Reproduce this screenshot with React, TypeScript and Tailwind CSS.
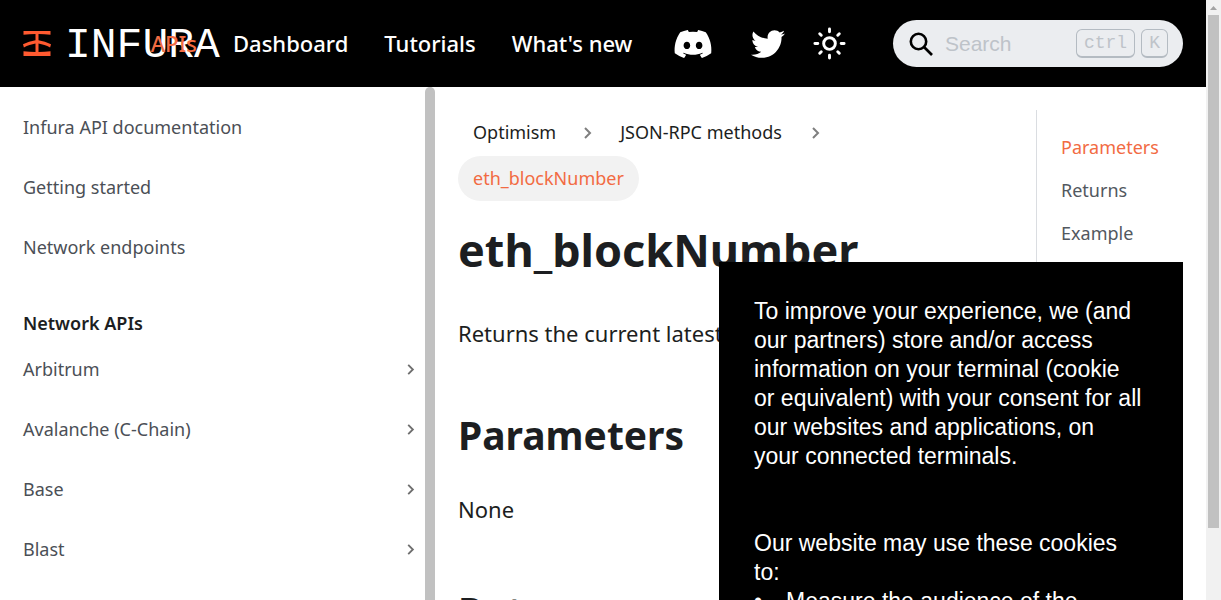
import React from "react";
import { FaDiscord, FaTwitter } from "react-icons/fa";

const docLinks = ["Infura API documentation", "Getting started", "Network endpoints"];
const networks = ["Arbitrum", "Avalanche (C-Chain)", "Base", "Blast"];
const sections = ["Parameters", "Returns", "Example"];

function Chevron({ className }: { className: string }) {
  return (
    <svg viewBox="0 0 10 14" fill="none" stroke="currentColor" strokeWidth="2" className={className} aria-hidden="true">
      <path d="M2 2l5 5-5 5" />
    </svg>
  );
}

function LogoMark() {
  return (
    <svg viewBox="0 0 28 25" className="h-[25px] w-7 shrink-0" fill="#ff5a30" aria-hidden="true">
      <path d="M.5 0h27v3.800c-4-.5-8-.8-12-.9v6.300c4.300.7 8.500 2.100 12.500 4.100l-.9 3.200c-3.700-1.900-7.600-3.200-11.600-3.900v8.500c4 0 8-.3 12-.8V25H.5v-4.700c4 .5 8 .8 12 .8v-8.500c-4 .7-7.900 2-11.600 3.900L0 13.300c4-2 8.200-3.400 12.500-4.100V2.900c-4 .1-8 .4-12 .9z" />
    </svg>
  );
}

function Sun() {
  return (
    <svg viewBox="0 0 24 24" fill="none" stroke="currentColor" strokeWidth="2" strokeLinecap="round" className="size-[35px]" aria-hidden="true">
      <circle cx="12" cy="12" r="4" />
      <path d="M12 2v2M12 20v2M2 12h2M20 12h2M5.290 5.290l1.060 1.060M17.650 17.650l1.060 1.060M18.710 5.290l-1.060 1.060M6.350 17.650l-1.060 1.060" />
    </svg>
  );
}

function Navbar() {
  return (
    <header className="flex h-[87px] shrink-0 items-center bg-black px-[23px] text-white">
      <a href="#home" aria-label="Infura" className="relative flex w-[210px] shrink-0 items-center gap-[14px]">
        <LogoMark />
        <span className="pt-1 font-['Liberation_Mono',monospace] text-[43px] leading-none">INFURA</span>
      </a>
      <nav className="relative flex items-center gap-9 text-[22px] font-medium whitespace-nowrap">
        <a href="#apis" className="absolute right-full mr-9 text-[#f26b43]">APIs</a>
        <a href="#dashboard">Dashboard</a>
        <a href="#tutorials">Tutorials</a>
        <a href="#new">What's new</a>
      </nav>
      <div className="ml-auto flex items-center">
        <a href="#discord" aria-label="Discord"><FaDiscord className="h-8 w-10" /></a>
        <a href="#twitter" aria-label="Twitter" className="ml-[38px]"><FaTwitter className="size-[34px]" /></a>
        <button type="button" aria-label="Switch theme" className="ml-[27px]"><Sun /></button>
        <label className="ml-[46px] flex h-[47px] w-[290px] items-center rounded-full bg-[#ebedf0] pr-[15px] pl-4 font-['Liberation_Sans',sans-serif]">
          <svg viewBox="0 0 24 24" fill="none" stroke="black" strokeWidth="2.600" className="size-6 shrink-0" aria-hidden="true">
            <circle cx="9.500" cy="9.500" r="7.700" />
            <path d="M15 15l8 8" />
          </svg>
          <input type="search" aria-label="Search" placeholder="Search" className="ml-3 min-w-0 flex-1 bg-transparent text-[21px] text-black outline-none placeholder:text-[#bec3c9]" />
          <span className="flex gap-[6px] font-['Liberation_Mono',monospace] text-lg text-[#bec3c9]">
            <kbd className="flex h-[29px] items-center rounded-md border border-b-2 border-[#b4bbc2] px-[7px] font-['Liberation_Mono',monospace]">ctrl</kbd>
            <kbd className="flex h-[29px] items-center rounded-md border border-b-2 border-[#b4bbc2] px-[7px] font-['Liberation_Mono',monospace]">K</kbd>
          </span>
        </label>
      </div>
    </header>
  );
}

function Sidebar() {
  return (
    <aside className="flex w-[435px] shrink-0 overflow-hidden">
      <nav className="flex-1 pt-[10px] pr-[9px] pl-[23px] text-lg text-[#4b4f56]">
        <ul>
          {docLinks.map((label) => (
            <li key={label} className="flex h-[60px] items-center"><a href="#doc">{label}</a></li>
          ))}
        </ul>
        <h2 className="mt-[30px] flex h-8 items-center font-semibold text-[#1c1e21]">Network APIs</h2>
        <ul>
          {networks.map((label) => (
            <li key={label} className="flex h-[60px] items-center">
              <a href="#network" className="flex flex-1 items-center justify-between">
                {label}
                <Chevron className="h-[13px] w-[10px] text-[#6f6f6f]" />
              </a>
            </li>
          ))}
        </ul>
      </nav>
      <div className="w-[10px] rounded-t-full bg-[#c1c1c1]" />
    </aside>
  );
}

function Article() {
  return (
    <article className="min-w-0 flex-1 text-[#1c1e21]">
      <nav aria-label="Breadcrumbs">
        <ol className="flex max-w-[400px] flex-wrap items-center gap-y-px text-lg leading-[45px]">
          <li className="flex items-center"><a href="#optimism" className="px-[15px]">Optimism</a><Chevron className="mx-3 h-[14px] w-[10px] text-[#7f7f7f]" /></li>
          <li className="flex items-center"><a href="#methods" className="px-[15px]">JSON-RPC methods</a><Chevron className="mx-[14px] h-[14px] w-[10px] text-[#7f7f7f]" /></li>
          <li className="rounded-full bg-[#f2f2f2] px-[15px] text-[#f26b43]">eth_blockNumber</li>
        </ol>
      </nav>
      <h1 className="mt-5 text-[45px] leading-[58px] font-bold">eth_blockNumber</h1>
      <p className="mt-[35px] text-[22px] leading-[38px]">Returns the current latest block number.</p>
      <h2 className="mt-[58px] text-[39px] leading-[50px] font-bold">Parameters</h2>
      <p className="mt-[30px] text-[22px] leading-[38px]">None</p>
      <h2 className="mt-[58px] text-[39px] leading-[50px] font-bold">Returns</h2>
    </article>
  );
}

function CookieNotice() {
  return (
    <section role="dialog" aria-label="Cookie consent" className="fixed top-[262px] right-[38px] bottom-0 w-[464px] overflow-hidden bg-black pt-[35px] pr-10 pl-[35px] font-['Liberation_Sans',sans-serif] text-[23px] leading-[29px] text-white">
      <p>To improve your experience, we (and our partners) store and/or access information on your terminal (cookie or equivalent) with your consent for all our websites and applications, on your connected terminals.</p>
      <p className="mt-[58px]">Our website may use these cookies to:</p>
      <ul>
        <li className="flex gap-6"><span aria-hidden="true">•</span><span>Measure the audience of the advertising on our website</span></li>
      </ul>
    </section>
  );
}

export default function App() {
  return (
    <div className="flex h-screen overflow-hidden bg-white font-['Noto_Sans',sans-serif]">
      <div className="flex min-w-0 flex-1 flex-col">
        <Navbar />
        <div className="flex min-h-0 flex-1">
          <Sidebar />
          <main className="flex min-w-0 flex-1 overflow-hidden pt-[23px] pl-[23px]">
            <Article />
            <nav aria-label="On this page" className="w-[170px] shrink-0 border-l border-[#dadde1] pt-4 pl-6 text-lg text-[#525860]">
              <ul>
                {sections.map((label, i) => (
                  <li key={label} className={i === 0 ? "leading-[43px] text-[#f26b43]" : "leading-[43px]"}><a href="#section">{label}</a></li>
                ))}
              </ul>
            </nav>
          </main>
        </div>
      </div>
      <div aria-hidden="true" className="flex w-[15px] shrink-0 flex-col items-center bg-[#f1f1f1]">
        <svg viewBox="0 0 15 15" className="size-[15px] shrink-0" fill="#a3a3a3"><path d="M4 10h7l-3.500-4z" /></svg>
        <div className="h-[513px] w-[11px] bg-[#c1c1c1]" />
      </div>
      <CookieNotice />
    </div>
  );
}
